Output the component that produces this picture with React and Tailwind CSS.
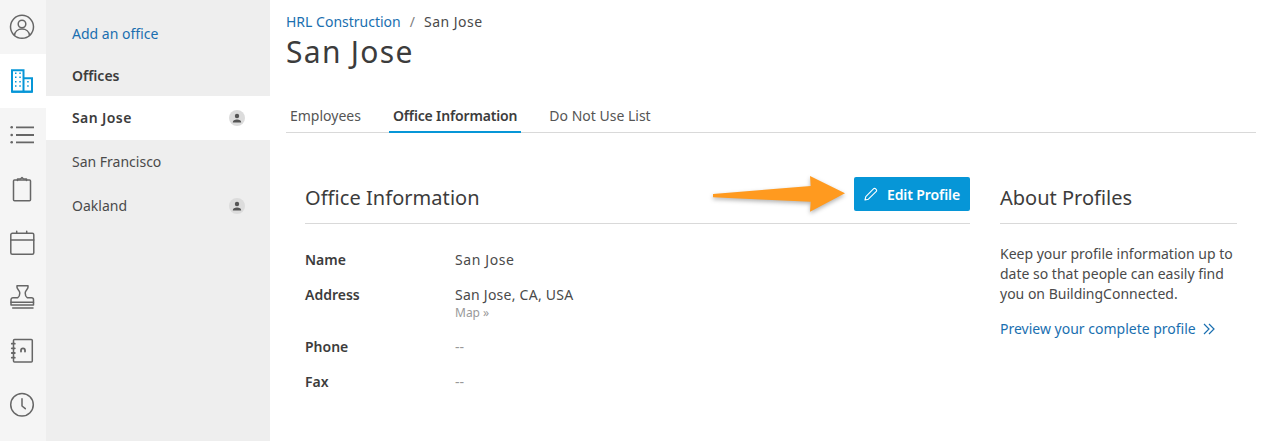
const font = { fontFamily: '"Noto Sans", sans-serif' };

function RailIcon({ active, children }) {
  return (
    <div className={`flex h-[54px] items-center justify-center pr-[2px] ${active ? 'bg-white text-[#0696d7]' : 'text-[#666666]'}`}>
      <svg width="26" height="26" viewBox="0 0 26 26" fill="none" stroke="currentColor" strokeWidth="1.5" strokeLinecap="round" strokeLinejoin="round">
        {children}
      </svg>
    </div>
  );
}

function PersonBadge() {
  return (
    <span className="flex h-4 w-4 items-center justify-center overflow-hidden rounded-full bg-[#dcdcdc]">
      <svg width="12" height="12" viewBox="0 0 12 12" fill="#555555">
        <circle cx="6" cy="4" r="2.2" />
        <path d="M1.8 10.5c0-2.2 1.8-3 4.2-3s4.2.8 4.2 3z" />
      </svg>
    </span>
  );
}

function InfoRow({ label, children, className }) {
  return (
    <div className={`flex text-[14px] leading-5 ${className}`}>
      <div className="w-[150px] font-semibold text-[#3c3c3c]">{label}</div>
      <div className="text-[#4a4a4a]">{children}</div>
    </div>
  );
}

export default function App() {
  return (
    <div className="flex h-[441px] w-[1270px] overflow-hidden bg-white" style={font}>
      <div className="w-[46px] shrink-0 bg-[#f5f5f5]">
        <RailIcon>
          <circle cx="13" cy="12.8" r="11.5" />
          <circle cx="13" cy="10" r="3.8" />
          <path d="M5.5 21.5c.3-4 3.5-6.500 7.500-6.500s7.200 2.500 7.500 6.500" />
        </RailIcon>
        <RailIcon active>
          <g strokeWidth="2" strokeLinecap="butt" strokeLinejoin="miter">
            <path d="M3 23.7V2.300h11.500v21.400z" />
            <path d="M14.5 10.300H23v13.400h-8.500" />
            <path d="M3 23.7h20" />
          </g>
          <g fill="currentColor" stroke="none">
            <path d="M6 4.500h1.500V6H6zM10.300 4.500h1.500V6h-1.500zM6 8.500h1.500V10H6zM10.300 8.500h1.500V10h-1.500zM6 13h1.500v1.500H6zM10.300 13h1.500v1.500h-1.500zM6 17.200h1.500v1.500H6zM10.300 17.200h1.500v1.500h-1.500zM18.200 13h1.500v1.500h-1.500zM18.200 17.200h1.500v1.500h-1.500z" />
          </g>
        </RailIcon>
        <RailIcon>
          <path strokeWidth="1.8" strokeLinecap="butt" d="M7 5.300h18M7 13h18M7 20.300h18" />
          <g fill="currentColor" stroke="none">
            <circle cx="2.7" cy="5.3" r="1.3" />
            <circle cx="2.7" cy="13" r="1.3" />
            <circle cx="2.7" cy="20.3" r="1.3" />
          </g>
        </RailIcon>
        <RailIcon>
          <rect x="4.5" y="4" width="17" height="20.7" rx="1" />
          <path d="M8.5 4.500V3h3l1.500-1.500L14.500 3h3v1.500" />
        </RailIcon>
        <RailIcon>
          <rect x="1.8" y="3.3" width="23" height="21" rx="1.5" />
          <path d="M1.8 10h23M7.700 1.300v2M17.700 1.300v2" />
        </RailIcon>
        <RailIcon>
          <path d="M8 1.800h11v1.500c0 2-2.800 3-2.800 5.700 0 2 .6 3.800 2 4.700h4.300a2 2 0 0 1 2 2v5.300H2v-5.300a2 2 0 0 1 2-2h4.800c1.400-.9 2-2.700 2-4.700 0-2.700-2.800-3.700-2.800-5.700z" />
          <path d="M2 18.200h22.500M3.700 23.900H24" />
        </RailIcon>
        <RailIcon>
          <rect x="4.5" y="1.500" width="18.800" height="22.500" rx="1" />
          <path strokeWidth="1.8" d="M2.800 5.700h3M2.800 10.300h3M2.800 15h3M2.800 19.700h3" />
          <path strokeWidth="1.8" d="M12 13.500v-1.200a2 2 0 0 1 4 0v1.200" />
        </RailIcon>
        <RailIcon>
          <circle cx="13" cy="12.8" r="11.3" />
          <path d="M13 6.700V14l3.300 2.700" />
        </RailIcon>
      </div>

      <div className="w-[224px] shrink-0 bg-[#eeeeee] pt-[13px] text-[14px] leading-5 text-[#4a4a4a]">
        <div className="flex h-[42px] items-center pl-[26px] text-[#1a6fb0]">Add an office</div>
        <div className="flex h-[41px] items-center pl-[26px] font-semibold text-[#3c3c3c]">Offices</div>
        <div className="flex h-[44px] items-center justify-between bg-white pl-[26px] pr-[25px] font-semibold tracking-[0.4px] text-[#3c3c3c]">
          San Jose
          <PersonBadge />
        </div>
        <div className="flex h-[44px] items-center pl-[26px]">San Francisco</div>
        <div className="flex h-[44px] items-center justify-between pl-[26px] pr-[25px]">
          Oakland
          <PersonBadge />
        </div>
      </div>

      <div className="relative flex-1 pl-4 pr-[14px]">
        <div className="mt-[11px] flex h-5 items-center text-[14px] text-[#4a4a4a]">
          <span className="text-[#1a6fb0]">HRL Construction</span>
          <span className="mx-[9px] text-[#808080]">/</span>
          <span className="tracking-[0.5px]">San Jose</span>
        </div>
        <h1 className="mt-px h-10 text-[30px] leading-10 tracking-[1.3px] text-[#3c3c3c]">San Jose</h1>

        <div className="mt-[34px] flex h-[27px] border-b border-[#d9d9d9] text-[14px] text-[#555555]">
          <div className="px-1 leading-5">Employees</div>
          <div className="-mb-px ml-6 border-b-2 border-[#0696d7] px-1 font-semibold leading-5 tracking-[-0.15px] text-[#3c3c3c]">Office Information</div>
          <div className="ml-6 px-1 leading-5">Do Not Use List</div>
        </div>

        <div className="mt-[44px] flex pl-[19px]">
          <div className="w-[665px]">
            <div className="flex h-[47px] items-start justify-between border-b border-[#d9d9d9]">
              <h2 className="mt-[7px] text-[20px] leading-7 tracking-[0.05px] text-[#3c3c3c]">Office Information</h2>
              <button className="flex h-[34px] w-[116px] items-center justify-center gap-[9px] rounded-[2px] bg-[#0696d7] text-[14px] font-semibold tracking-[-0.1px] text-white">
                <svg width="14" height="14" viewBox="0 0 14 14" fill="none" stroke="currentColor" strokeWidth="1.1" strokeLinejoin="round">
                  <path d="M1 13l.8-3.400L9.700 1.700a1.200 1.200 0 0 1 1.700 0l.9.900a1.200 1.200 0 0 1 0 1.700L4.400 12.200z" />
                </svg>
                Edit Profile
              </button>
            </div>
            <InfoRow label="Name" className="mt-[26px]"><span className="tracking-[0.6px]">San Jose</span></InfoRow>
            <InfoRow label="Address" className="mt-[15px]">
              <span className="tracking-[0.25px]">San Jose, CA, USA</span>
              <div className="text-[12px] leading-[16px] text-[#999999]">Map »</div>
            </InfoRow>
            <InfoRow label="Phone" className="mt-[16px]"><span className="text-[#999999]">--</span></InfoRow>
            <InfoRow label="Fax" className="mt-[15px]"><span className="text-[#999999]">--</span></InfoRow>
          </div>

          <div className="ml-[30px] w-[237px]">
            <h2 className="h-[47px] border-b border-[#d9d9d9] pt-[7px] text-[20px] leading-7 text-[#3c3c3c]">About Profiles</h2>
            <p className="mt-5 text-[14px] leading-5 text-[#4a4a4a]">
              Keep your profile information up to date so that people can easily find you on BuildingConnected.
            </p>
            <div className="mt-[15px] flex items-center gap-[7px] text-[14px] leading-5 text-[#1a6fb0]">
              Preview your complete profile
              <svg width="12" height="12" viewBox="0 0 12 12" fill="none" stroke="currentColor" strokeWidth="1.2">
                <path d="M1 1l5 5-5 5M6 1l5 5-5 5" />
              </svg>
            </div>
          </div>
        </div>

        <svg className="absolute left-[438px] top-[170px]" width="145" height="50" viewBox="0 0 145 50">
          <path d="M5 24L102.700 16 102 6 137 23.300 102 41.700 102.700 31.700 5 27.300z" fill="#ff9a1f" className="drop-shadow-[0_2px_2px_rgba(0,0,0,0.3)]" />
        </svg>
      </div>
    </div>
  );
}
